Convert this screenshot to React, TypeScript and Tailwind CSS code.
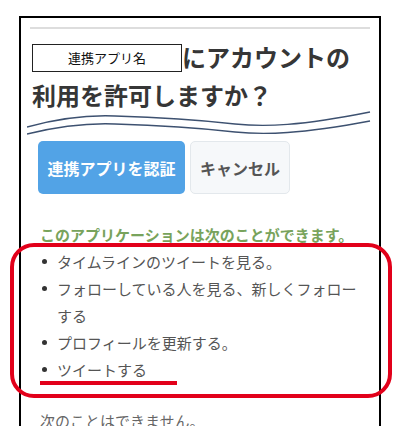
import React from "react"

const jp = { fontFamily: '"Noto Sans CJK JP", "Noto Sans", sans-serif' }

export default function App() {
  const allowed = [
    "タイムラインのツイートを見る。",
    "フォローしている人を見る、新しくフォローする",
    "プロフィールを更新する。",
    "ツイートする",
  ]

  return (
    <div className="relative w-[411px] h-[426px] bg-white overflow-hidden" style={jp}>
      {/* black frame */}
      <div className="ml-[19px] mt-[16px] w-[362px] h-[420px] border-x-2 border-t-2 border-black">
        <div className="pt-[9px] px-[9px]">
          <div className="h-[2px] bg-[#dddddd]" />
        </div>

        {/* heading */}
        <h1 className="mt-[9px] pl-[11px] text-[24px] leading-[38px] font-bold text-[#363636]">
          <span className="inline-flex items-center justify-center align-middle w-[150px] h-[28px] border border-[#222] text-[13px] font-normal text-[#111] -mt-[5px]">
            連携アプリ名
          </span>
          にアカウントの
          <br />
          利用を許可しますか？
        </h1>

        {/* wavy lines */}
        <svg className="block ml-[6px] -mt-[6px]" width="345" height="32" viewBox="27 108 345 32">
          <path
            d="M27 127 C60 118 90 115 115 116 C150 117 200 120 235 124 C265 127 300 126 370 112"
            fill="none"
            stroke="#3d5170"
            strokeWidth="1.4"
          />
          <path
            d="M27 134 C60 126 90 123 115 124 C150 125 200 128 235 132 C265 135 300 134 370 121"
            fill="none"
            stroke="#3d5170"
            strokeWidth="1.4"
          />
        </svg>

        {/* buttons */}
        <div className="flex gap-[5px] pl-[17px] mt-[1px]">
          <button className="w-[147px] h-[53px] rounded-[5px] bg-[#52a3e6] text-white text-[16px] font-bold">
            連携アプリを認証
          </button>
          <button className="w-[100px] h-[53px] rounded-[5px] bg-[#f6f8fa] border border-[#e3e8ec] text-[#555] text-[16px] font-bold">
            キャンセル
          </button>
        </div>

        {/* permissions */}
        <div className="pl-[19px] pr-[10px] mt-[27px] text-[15px] leading-[27px]">
          <p className="text-[#78a35c] font-semibold">このアプリケーションは次のことができます。</p>
          <ul className="text-[#555555]">
            {allowed.map((t) => (
              <li key={t} className="flex">
                <span className="w-[17px] shrink-0 flex items-start pt-[11px] pl-[2px]">
                  <span className="block w-[5px] h-[5px] rounded-full bg-[#333]" />
                </span>
                <span>{t}</span>
              </li>
            ))}
          </ul>
          <p className="mt-[24px] text-[#666666]">次のことはできません。</p>
        </div>
      </div>

      {/* red annotations */}
      <div className="absolute left-[10px] top-[243px] w-[382px] h-[155px] border-[4px] border-[#e2001a] rounded-[24px]" />
      <div className="absolute left-[40px] top-[381px] w-[137px] h-[4px] bg-[#e2001a]" />
    </div>
  )
}
